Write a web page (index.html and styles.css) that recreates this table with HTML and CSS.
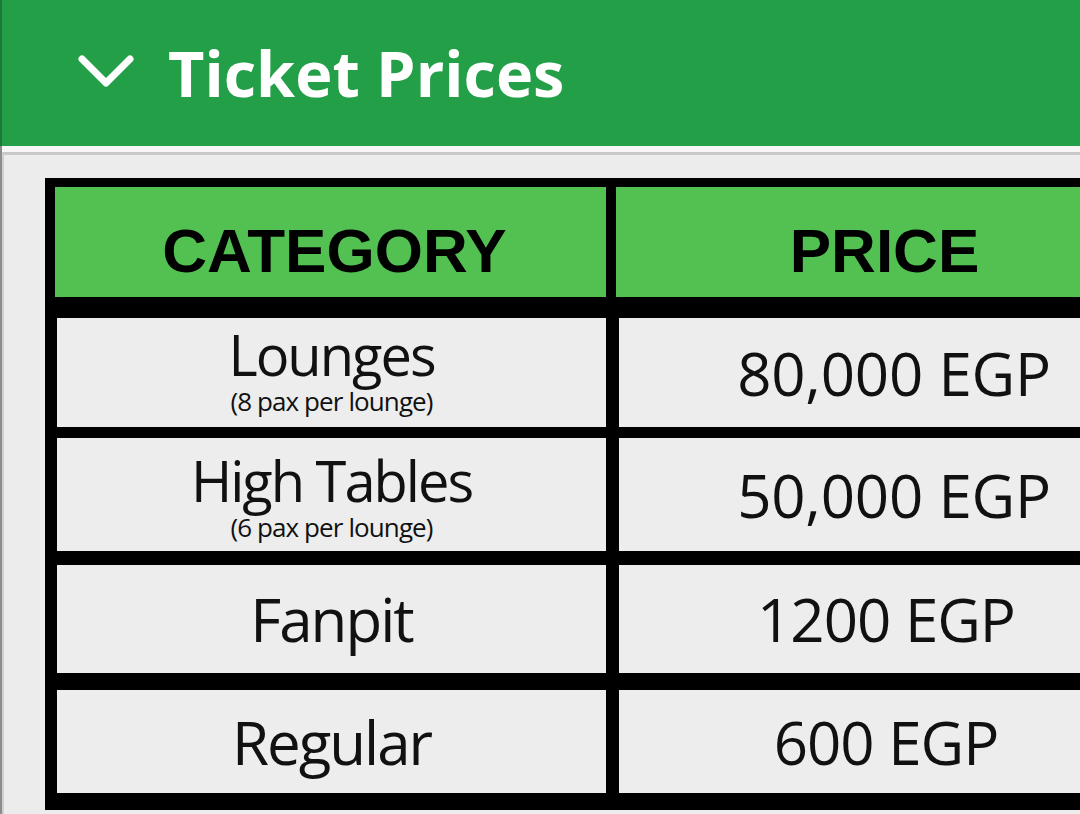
FILE: index.html
```html
<!DOCTYPE html>
<html lang="en">
<head>
<meta charset="utf-8">
<title>Ticket Prices</title>
<link rel="stylesheet" href="styles.css">
</head>
<body>
<header class="bar">
  <svg class="chev" width="60" height="40" viewBox="0 0 60 40" aria-hidden="true">
    <polyline points="6,7 30,31 54,7" />
  </svg>
  <h1 class="title">Ticket Prices</h1>
</header>
<div class="strip">
  <section class="panel">
    <div class="table">
      <div class="row head">
        <div class="cell hcell">CATEGORY</div>
        <div class="cell hcell">PRICE</div>
      </div>
      <div class="row data r1">
        <div class="cell stack">
          <span class="name small">Lounges</span>
          <span class="sub">(8 pax per lounge)</span>
        </div>
        <div class="cell"><span class="price wide">80,000 EGP</span></div>
      </div>
      <div class="row data r2">
        <div class="cell stack">
          <span class="name small">High Tables</span>
          <span class="sub">(6 pax per lounge)</span>
        </div>
        <div class="cell"><span class="price wide">50,000 EGP</span></div>
      </div>
      <div class="row data r3">
        <div class="cell"><span class="name">Fanpit</span></div>
        <div class="cell"><span class="price">1200 EGP</span></div>
      </div>
      <div class="row data r4">
        <div class="cell"><span class="name">Regular</span></div>
        <div class="cell"><span class="price">600 EGP</span></div>
      </div>
    </div>
  </section>
</div>
</body>
</html>
```

FILE: styles.css
```css
html, body {
  margin: 0;
  height: 100%;
  overflow: hidden;
  background: #ececec;
}

body {
  display: flex;
  flex-direction: column;
}

.bar {
  flex: none;
  height: 146px;
  box-sizing: border-box;
  background: #23a047;
  border-left: 2px solid #1a7a36;
  display: flex;
  align-items: center;
  padding-left: 74px;
  gap: 32px;
}

.chev {
  display: block;
  margin-top: -3px;
}

.chev polyline {
  fill: none;
  stroke: #ffffff;
  stroke-width: 7;
  stroke-linecap: round;
  stroke-linejoin: round;
}

.title {
  margin: 0;
  color: #ffffff;
  font-family: "Open Sans", "Noto Sans", sans-serif;
  font-weight: 700;
  font-size: 63px;
  line-height: 1;
  margin-top: -2px;
}

.strip {
  flex: 1;
  min-height: 0;
  display: flex;
  flex-direction: column;
  background: #f6f6f6;
  padding-top: 6px;
  border-left: 2px solid #8c8c8c;
}

.panel {
  flex: 1;
  min-height: 0;
  overflow: hidden;
  background: #ececec;
  border-top: 3px solid #c9c9c9;
  border-left: 2px solid #cfcfcf;
  padding: 23px 0 0 41px;
}

.table {
  width: 1118px;
  box-sizing: border-box;
  background: #000000;
  padding: 9px 10px 17px 10px;
  display: flex;
  flex-direction: column;
}

.row {
  display: grid;
}

.head {
  grid-template-columns: 551px 1fr;
  column-gap: 10px;
  height: 110px;
}

.data {
  grid-template-columns: 549px 1fr;
  column-gap: 13px;
  margin-left: 2px;
}

.r1 { margin-top: 21px; height: 109px; }
.r2 { margin-top: 11px; height: 113px; }
.r3 { margin-top: 14px; height: 108px; }
.r4 { margin-top: 17px; height: 103px; }

.cell {
  background: #ededed;
  display: flex;
  flex-direction: column;
  align-items: center;
  justify-content: center;
  color: #111111;
  font-family: "Open Sans", "Noto Sans", sans-serif;
}

.hcell {
  background: #52c152;
  font-family: "Liberation Sans", Arial, sans-serif;
  font-weight: 700;
  font-size: 62px;
  line-height: 1;
  padding-top: 18px;
  box-sizing: border-box;
  color: #000000;
}

.hcell:first-child {
  padding-left: 8px;
}

.name {
  font-size: 60px;
  line-height: 1;
  letter-spacing: -2px;
}

.name.small {
  font-size: 56px;
}

.sub {
  font-size: 26px;
  line-height: 1;
  letter-spacing: -0.9px;
  margin-top: 6px;
}

.r1 .stack { padding-bottom: 6px; }
.r2 .stack { padding-top: 2px; }

.price {
  font-size: 60px;
  line-height: 1;
  letter-spacing: -1px;
}

.price.wide {
  letter-spacing: -0.2px;
  margin-left: 16px;
}
```
